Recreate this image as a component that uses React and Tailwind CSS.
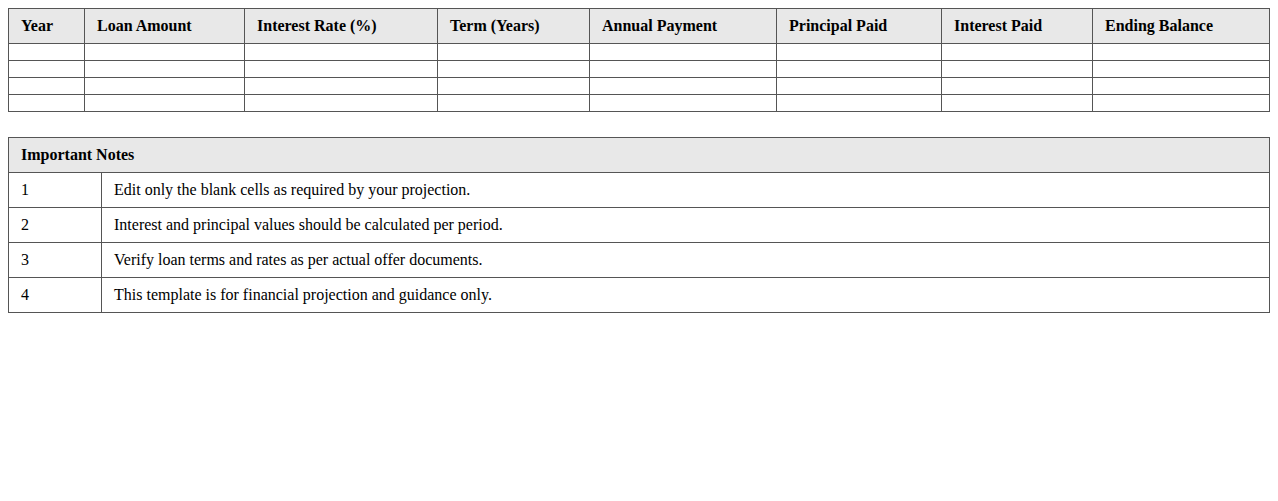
import React from 'react'

const COLUMNS = [
  { label: 'Year', width: 76 },
  { label: 'Loan Amount', width: 160 },
  { label: 'Interest Rate (%)', width: 193 },
  { label: 'Term (Years)', width: 152 },
  { label: 'Annual Payment', width: 187 },
  { label: 'Principal Paid', width: 165 },
  { label: 'Interest Paid', width: 151 },
  { label: 'Ending Balance', width: 177 },
]

const NOTES = [
  'Edit only the blank cells as required by your projection.',
  'Interest and principal values should be calculated per period.',
  'Verify loan terms and rates as per actual offer documents.',
  'This template is for financial projection and guidance only.',
]

const cell = 'border border-[#555555] px-3 py-2 text-left align-middle'

export default function App() {
  return (
    <div className="min-h-screen bg-white p-2 text-black font-['Liberation_Serif','Times_New_Roman',serif] text-[16px] leading-[18px]">
      {/* Loan schedule */}
      <table className="w-[1261px] table-fixed border-collapse mb-[25px]">
        <colgroup>
          {COLUMNS.map((c) => (
            <col key={c.label} style={{ width: c.width }} />
          ))}
        </colgroup>
        <thead>
          <tr className="bg-[#e8e8e8]">
            {COLUMNS.map((c) => (
              <th key={c.label} className={`${cell} font-bold`}>
                {c.label}
              </th>
            ))}
          </tr>
        </thead>
        <tbody>
          {[0, 1, 2, 3].map((r) => (
            <tr key={r}>
              {COLUMNS.map((c) => (
                <td key={c.label} className={cell}></td>
              ))}
            </tr>
          ))}
        </tbody>
      </table>

      {/* Notes */}
      <table className="w-[1262px] table-fixed border-collapse">
        <colgroup>
          <col style={{ width: 93 }} />
          <col />
        </colgroup>
        <thead>
          <tr className="bg-[#e8e8e8]">
            <th colSpan={2} className={`${cell} font-bold`}>
              Important Notes
            </th>
          </tr>
        </thead>
        <tbody>
          {NOTES.map((n, i) => (
            <tr key={i}>
              <td className={cell}>{i + 1}</td>
              <td className={cell}>{n}</td>
            </tr>
          ))}
        </tbody>
      </table>
    </div>
  )
}
